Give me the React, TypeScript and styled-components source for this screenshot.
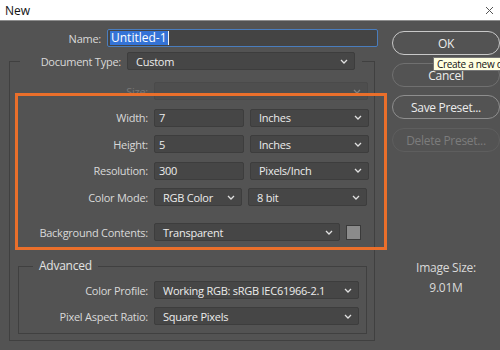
import styled, { createGlobalStyle } from 'styled-components'

const GlobalStyle = createGlobalStyle`
    html, body {
        margin: 0;
        padding: 0;
        background: #535353;
    }
`

const SWindow = styled.div`
    position: relative;
    width: 500px;
    height: 350px;
    overflow: hidden;
    background: #535353;
    display: flex;
    flex-direction: column;
    font-family: "Open Sans", "Noto Sans", sans-serif;
    font-size: 11px;
    letter-spacing: -0.25px;
    color: #d9d9d9;
`

const STitleBar = styled.div`
    flex: none;
    height: 20px;
    background: #ffffff;
    border-bottom: 1px solid #8e8e8e;
    display: flex;
    align-items: center;
    justify-content: space-between;
    padding: 0 6px 0 5px;
    color: #111;
    font-size: 12px;
    letter-spacing: 0;
`

const SMain = styled.div`
    display: flex;
    gap: 12px;
    padding-top: 8px;
`

const SLeft = styled.div`
    width: 380px;
    flex: none;
    display: flex;
    flex-direction: column;
`

const SRight = styled.div`
    width: 108px;
    flex: none;
    display: flex;
    flex-direction: column;
    gap: 8px;
    padding-top: 2px;
`

const SRow = styled.div<{ $gap?: number }>`
    display: flex;
    align-items: center;
    gap: ${({ $gap }) => $gap ?? 6}px;
    height: 18px;
`

const SLabel = styled.span<{ $w: number; $disabled?: boolean }>`
    flex: none;
    width: ${({ $w }) => $w}px;
    text-align: right;
    white-space: nowrap;
    color: ${({ $disabled }) => ($disabled ? '#787878' : '#d9d9d9')};
`

const SField = styled.div<{ $w: number }>`
    box-sizing: border-box;
    flex: none;
    width: ${({ $w }) => $w}px;
    height: 18px;
    display: flex;
    align-items: center;
    padding: 0 4px;
    background: #464646;
    border: 1px solid #3d3d3d;
    border-radius: 2px;
    color: #ececec;
`

const SNameField = styled(SField)`
    background: #444444;
    border-color: #4a7dbd;
    padding: 0 2px;
`

const SSelected = styled.span`
    background: #3473d6;
    color: #ffffff;
    padding: 0 1px;
    font-size: 12px;
    letter-spacing: 0;
    line-height: 14px;
    border-right: 1px solid #f0f0f0;
`

const SSelect = styled.div<{ $w: number; $disabled?: boolean }>`
    box-sizing: border-box;
    flex: none;
    width: ${({ $w }) => $w}px;
    height: 18px;
    display: flex;
    align-items: center;
    justify-content: space-between;
    padding: 0 6px 0 8px;
    background: ${({ $disabled }) => ($disabled ? '#4e4e4e' : '#464646')};
    border: 1px solid ${({ $disabled }) => ($disabled ? '#4a4a4a' : '#3d3d3d')};
    border-radius: 2px;
    color: #ececec;
    white-space: nowrap;
    overflow: hidden;
    svg {
        flex: none;
        opacity: ${({ $disabled }) => ($disabled ? 0.35 : 1)};
    }
`

const SSwatch = styled.div`
    flex: none;
    box-sizing: border-box;
    width: 15px;
    height: 15px;
    background: #8b8b8b;
    border: 1px solid #3a3a3a;
`

const SGroup = styled.fieldset`
    margin: 5px 5px 0 9px;
    padding: 12px 0 6px 0;
    border: 1px solid #404040;
    min-width: 0;
`

const SGroupLegend = styled.legend`
    margin-left: 10px;
    padding: 0 7px 0 0;
`

const SLegendRow = styled.div`
    display: flex;
    align-items: center;
    gap: 6px;
    height: 18px;
`

const SStack = styled.div`
    display: flex;
    flex-direction: column;
    gap: 8.5px;
`

const SSpacer = styled.div<{ $h: number }>`
    height: ${({ $h }) => $h}px;
`

const SAdvanced = styled.fieldset`
    margin: 17px 7px 0 8px;
    padding: 7px 0 8px 0;
    border: 1px solid #404040;
    min-width: 0;
    display: flex;
    flex-direction: column;
    gap: 8px;
`

const SAdvancedLegend = styled.legend`
    margin-left: 14px;
    padding: 0 6px;
    font-size: 12px;
    line-height: 16px;
    color: #e2e2e2;
`

const SButton = styled.button<{ $tone: 'default' | 'normal' | 'bright' | 'disabled' }>`
    box-sizing: border-box;
    height: 24px;
    width: 108px;
    border-radius: 12px;
    background: transparent;
    font-family: inherit;
    font-size: 12px;
    letter-spacing: -0.3px;
    padding: 0;
    color: ${({ $tone }) => ($tone === 'disabled' ? '#7c7c7c' : '#ececec')};
    border: 1.5px solid
        ${({ $tone }) =>
            $tone === 'default' ? '#c8c8c8' : $tone === 'bright' ? '#8e8e8e' : $tone === 'disabled' ? '#5e5e5e' : '#707070'};
`

const SImageSize = styled.div`
    margin-top: 100px;
    display: flex;
    flex-direction: column;
    align-items: center;
    gap: 4px;
    font-size: 12px;
    line-height: 16px;
    color: #d9d9d9;
`

const SHighlight = styled.div`
    position: absolute;
    left: 15px;
    top: 93px;
    width: 372px;
    height: 157px;
    box-sizing: border-box;
    border: 3px solid #ea6f2b;
    pointer-events: none;
`

const STooltip = styled.div`
    position: absolute;
    left: 433px;
    top: 57px;
    height: 12px;
    padding: 0 3px;
    display: flex;
    align-items: center;
    background: #ffffe1;
    border: 1px solid #767676;
    color: #111;
    font-size: 10px;
    letter-spacing: -0.3px;
    white-space: nowrap;
`

function Chevron() {
    return (
        <svg width="8" height="5" viewBox="0 0 8 5">
            <polyline points="1,1 4,4 7,1" fill="none" stroke="#e0e0e0" strokeWidth="1.3" />
        </svg>
    )
}

function Close() {
    return (
        <svg width="9" height="9" viewBox="0 0 9 9">
            <path d="M1 1 L8 8 M8 1 L1 8" stroke="#555" strokeWidth="1" />
        </svg>
    )
}

function Select({ w, value, disabled }: { w: number; value: string; disabled?: boolean }) {
    return (
        <SSelect $w={w} $disabled={disabled}>
            <span>{value}</span>
            <Chevron />
        </SSelect>
    )
}

export default function App() {
    return (
        <SWindow>
            <GlobalStyle />
            <STitleBar>
                <span>New</span>
                <Close />
            </STitleBar>
            <SMain>
                <SLeft>
                    <SRow>
                        <SLabel $w={101}>Name:</SLabel>
                        <SNameField $w={271}>
                            <SSelected>Untitled-1</SSelected>
                        </SNameField>
                    </SRow>
                    <SGroup>
                        <SGroupLegend>
                            <SLegendRow>
                                <SLabel $w={101}>Document Type:</SLabel>
                                <Select w={228} value="Custom" />
                            </SLegendRow>
                        </SGroupLegend>
                        <SStack>
                            <SRow>
                                <SLabel $w={138} $disabled>Size:</SLabel>
                                <Select w={214} value="" disabled />
                            </SRow>
                            <SRow>
                                <SLabel $w={138}>Width:</SLabel>
                                <SField $w={90}>7</SField>
                                <Select w={119} value="Inches" />
                            </SRow>
                            <SRow>
                                <SLabel $w={138}>Height:</SLabel>
                                <SField $w={90}>5</SField>
                                <Select w={119} value="Inches" />
                            </SRow>
                            <SRow>
                                <SLabel $w={138}>Resolution:</SLabel>
                                <SField $w={90}>300</SField>
                                <Select w={119} value="Pixels/Inch" />
                            </SRow>
                            <SRow>
                                <SLabel $w={138}>Color Mode:</SLabel>
                                <Select w={88} value="RGB Color" />
                                <Select w={119} value="8 bit" />
                            </SRow>
                        </SStack>
                        <SSpacer $h={17} />
                        <SRow>
                            <SLabel $w={138}>Background Contents:</SLabel>
                            <Select w={186} value="Transparent" />
                            <SSwatch />
                        </SRow>
                        <SAdvanced>
                            <SAdvancedLegend>Advanced</SAdvancedLegend>
                            <SRow>
                                <SLabel $w={129}>Color Profile:</SLabel>
                                <Select w={205} value="Working RGB:  sRGB IEC61966-2.1" />
                            </SRow>
                            <SRow>
                                <SLabel $w={129}>Pixel Aspect Ratio:</SLabel>
                                <Select w={205} value="Square Pixels" />
                            </SRow>
                        </SAdvanced>
                    </SGroup>
                </SLeft>
                <SRight>
                    <SButton $tone="default">OK</SButton>
                    <SButton $tone="normal">Cancel</SButton>
                    <SButton $tone="bright">Save Preset...</SButton>
                    <SButton $tone="disabled" style={{ marginTop: 1 }}>Delete Preset...</SButton>
                    <SImageSize>
                        <span>Image Size:</span>
                        <span>9.01M</span>
                    </SImageSize>
                </SRight>
            </SMain>
            <SHighlight />
            <STooltip>Create a new document</STooltip>
        </SWindow>
    )
}
